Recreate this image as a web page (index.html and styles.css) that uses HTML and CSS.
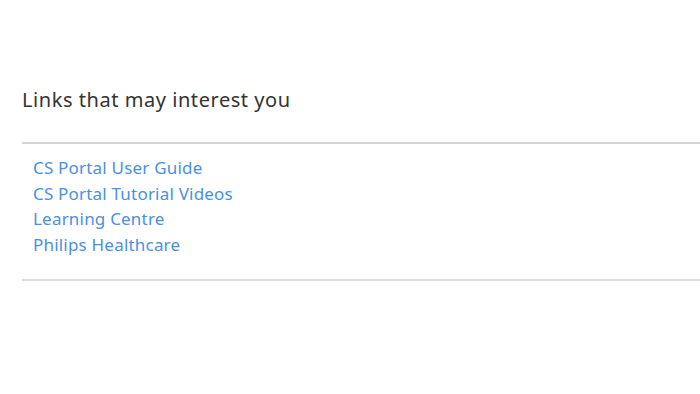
FILE: index.html
```html
<!DOCTYPE html>
<html>
<head>
<meta charset="utf-8">
<link rel="stylesheet" href="styles.css">
</head>
<body>
<section class="links-panel">
  <h2 class="links-title">Links that may interest you</h2>
  <ul class="links-list">
    <li><a href="#">CS Portal User Guide</a></li>
    <li><a href="#">CS Portal Tutorial Videos</a></li>
    <li><a href="#">Learning Centre</a></li>
    <li><a href="#">Philips Healthcare</a></li>
  </ul>
</section>
</body>
</html>
```
FILE: styles.css
```css
html, body {
  margin: 0;
  padding: 0;
  background: #ffffff;
}
body {
  font-family: "Noto Sans", "Open Sans", sans-serif;
}
.links-panel {
  padding: 86px 0 0 22px;
}
.links-title {
  margin: 0;
  font-size: 20px;
  font-weight: 400;
  letter-spacing: 0.55px;
  color: #333333;
  line-height: 28px;
  padding-bottom: 28px;
  border-bottom: 2px solid #d4d4d4;
}
.links-list {
  list-style: none;
  margin: 0;
  padding: 11px 0 21px 11px;
  border-bottom: 2px solid #dcdcdc;
}
.links-list li {
  font-size: 17px;
  letter-spacing: 0.2px;
  line-height: 25.7px;
}
.links-list a {
  color: #4a8fe6;
  text-decoration: none;
}
```
